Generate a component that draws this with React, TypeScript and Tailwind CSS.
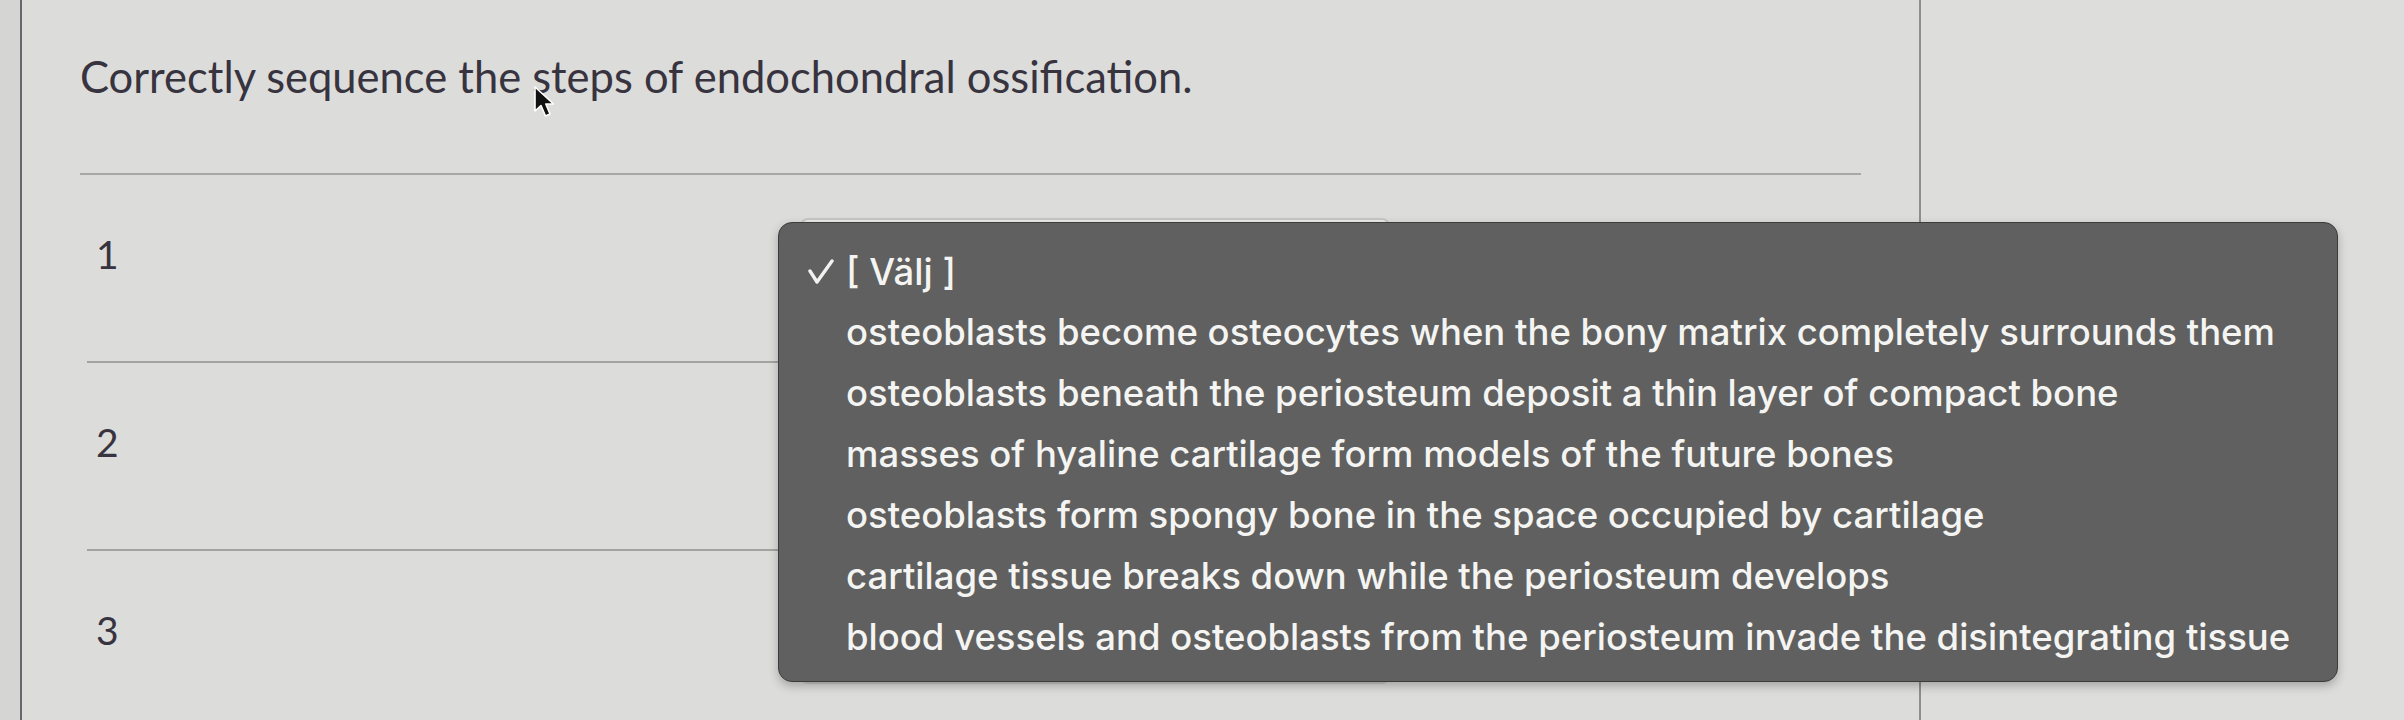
const options = [
  "osteoblasts become osteocytes when the bony matrix completely surrounds them",
  "osteoblasts beneath the periosteum deposit a thin layer of compact bone",
  "masses of hyaline cartilage form models of the future bones",
  "osteoblasts form spongy bone in the space occupied by cartilage",
  "cartilage tissue breaks down while the periosteum develops",
  "blood vessels and osteoblasts from the periosteum invade the disintegrating tissue",
];

const rows = ["1", "2", "3"];

function CheckMark() {
  return (
    <svg width="26" height="26" viewBox="0 0 26 26" fill="none">
      <polyline points="2,12 9,23 24,2" stroke="#f2f2f0" strokeWidth="3.4" strokeLinecap="round" strokeLinejoin="round" />
    </svg>
  );
}

function Pointer() {
  return (
    <svg width="24" height="34" viewBox="0 0 24 34">
      <path d="M2 2 L2 26 L8 20.5 L12.5 31 L17 29 L12.8 19 L20.5 19 Z" fill="#111" stroke="#fff" strokeWidth="1.6" strokeLinejoin="round" />
    </svg>
  );
}

export default function App() {
  return (
    <div className="relative flex h-[720px] w-[2404px] overflow-hidden bg-[#dcdcda] font-['Lato',sans-serif]">
      {/* left rail */}
      <div className="w-[22px] shrink-0 border-r-2 border-[#67666c] bg-[#d5d5d3]" />

      {/* quiz column */}
      <div className="w-[1899px] shrink-0 border-r-2 border-[#8e8e90] px-[58px]">
        <div className="border-b-2 border-[#a8a8a6] pt-[51px] pb-[71px] text-[43.5px] leading-[51px] text-[#37333f]">
          Correctly sequence the steps of endochondral ossification.
        </div>
        <div className="ml-[7px]">
          {rows.map((n, idx) => (
            <div
              key={n}
              className={`flex h-[188px] ${idx < rows.length - 1 ? "border-b-2 border-[#a3a3a1]" : ""}`}
            >
              <div className="w-[713px] pl-[9px] pt-[56px] text-[39px] leading-[46px] text-[#37333f]">{n}</div>
              <div className="mt-[43px] h-[90px] w-[590px] rounded-[8px] border-2 border-[#c6c6c4] bg-[#ebebe9]" />
            </div>
          ))}
        </div>
      </div>

      <div className="flex-1 bg-[#dddddb]" />

      {/* open select menu */}
      <div className="absolute left-[778px] top-[222px] h-[460px] w-[1560px] rounded-[14px] border border-[#3c3c3c] bg-[#5f605f] pt-[19px] font-['Inter',sans-serif] text-[36.5px] font-medium text-[#f4f4f2] shadow-[0_4px_10px_rgba(0,0,0,0.25)]">
        <div className="flex h-[60px] items-center">
          <div className="flex w-[67px] justify-start pl-[29px]">
            <CheckMark />
          </div>
          <span>[ Välj ]</span>
        </div>
        {options.map((opt) => (
          <div key={opt} className="flex h-[61px] items-center pl-[67px]">
            {opt}
          </div>
        ))}
      </div>

      {/* mouse pointer */}
      <div className="absolute left-[533px] top-[85px]">
        <Pointer />
      </div>
    </div>
  );
}
